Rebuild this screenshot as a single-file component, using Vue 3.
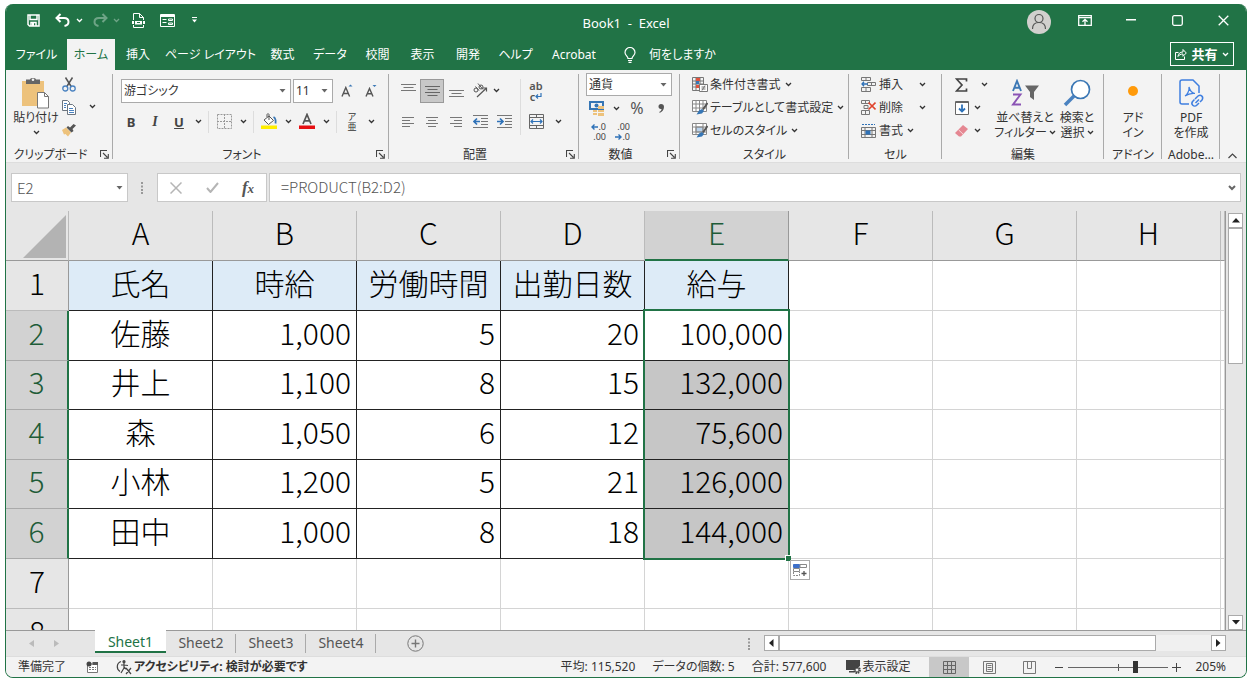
<script setup>
import { h, ref } from 'vue'

const Chevron = () =>
  h('svg', { class: 'chev', width: 7, height: 5, viewBox: '0 0 7 5', 'aria-hidden': 'true' }, [
    h('path', { d: 'M1 1l2.5 2.5L6 1', fill: 'none', stroke: 'currentColor', 'stroke-width': 1.3 }),
  ])
const Caret = () =>
  h('svg', { class: 'caret', width: 7, height: 4, viewBox: '0 0 7 4', 'aria-hidden': 'true' }, [
    h('path', { d: 'M.5 0h6L3.5 3.6z', fill: '#666' }),
  ])
const Launcher = () =>
  h('button', { class: 'launcher', 'aria-label': '詳細設定' }, [
    h('svg', { width: 9, height: 9, viewBox: '0 0 9 9' }, [
      h('path', { d: 'M.5 7V.5H7M3 3l4.500 4.500M8.300 4v4.300H4', fill: 'none', stroke: '#444', 'stroke-width': 1.100 }),
    ]),
  ])

const tabs = ['ファイル', 'ホーム', '挿入', 'ページ レイアウト', '数式', 'データ', '校閲', '表示', '開発', 'ヘルプ', 'Acrobat']
const columns = ['A', 'B', 'C', 'D', 'E', 'F', 'G', 'H']
const rows = [
  ['氏名', '時給', '労働時間', '出勤日数', '給与'],
  ['佐藤', '1,000', '5', '20', '100,000'],
  ['井上', '1,100', '8', '15', '132,000'],
  ['森', '1,050', '6', '12', '75,600'],
  ['小林', '1,200', '5', '21', '126,000'],
  ['田中', '1,000', '8', '18', '144,000'],
  [],
  [],
]
const sheets = ['Sheet1', 'Sheet2', 'Sheet3', 'Sheet4']
const activeTab = ref('ホーム')
const activeSheet = ref('Sheet1')
const cellName = ref('E2')
const formula = ref('=PRODUCT(B2:D2)')
const zoom = ref(68)

function cellClass(r, c) {
  return {
    filled: r < 6 && c < 5,
    title: r === 0 && c < 5,
    name: c === 0,
    picked: c === 4 && r > 1 && r < 6,
    anchor: c === 4 && r === 1,
  }
}
</script>

<template>
  <div class="page">
    <div class="window">
      <header class="titlebar">
        <div class="quick">
          <button aria-label="上書き保存">
            <svg width="13" height="13" viewBox="0 0 13 13" fill="none" stroke="#fff" stroke-width="1.500"><path d="M1 1h11v11H2.500L1 10.500zM3 1v4.500h7V1M4 12V8.500h5V12" /><path d="M5 9h2v3H5z" fill="#fff" stroke="none" /></svg>
          </button>
          <button aria-label="元に戻す">
            <svg width="15" height="14" viewBox="0 0 15 14" fill="none" stroke="#fff" stroke-width="2"><path d="M5.500 1L1.500 5l4 4M2 5h7c3 0 4.500 1.500 4.500 4 0 2-1.500 3.500-4 4" /></svg>
          </button>
          <button class="drop" aria-label="元に戻す一覧"><Chevron /></button>
          <button class="faded" aria-label="やり直し">
            <svg width="15" height="14" viewBox="0 0 15 14" fill="none" stroke="#fff" stroke-width="2"><path d="M9.500 1l4 4-4 4M13 5H6C3 5 1.500 6.500 1.500 9c0 2 1.500 3.500 4 4" /></svg>
          </button>
          <button class="drop faded" aria-label="やり直し一覧"><Chevron /></button>
          <button aria-label="印刷プレビュー">
            <svg width="13" height="15" viewBox="0 0 13 15" fill="none" stroke="#fff"><path d="M1.500 7V.5h6l4 4V7M7.500.5v4h4M1.500 12v2.500h10V12" /><path d="M0 8h2v3H0zM11 8h2v3h-2zM3 8h7v3.500H3z" fill="#fff" stroke="none" /><path d="M5 9.500h3" stroke="#217346" /></svg>
          </button>
          <button aria-label="フォーム">
            <svg width="15" height="13" viewBox="0 0 15 13" fill="none" stroke="#fff"><path d="M.5.5h14v12H.5z" /><path d="M.5 2h14" stroke-width="2" /><path d="M2.500 5.500h4M2.500 8.500h4M8.500 5h4v1.500h-4zM8.500 9h4v1.500h-4z" /></svg>
          </button>
          <button aria-label="クイック アクセスのユーザー設定">
            <svg width="5" height="6" viewBox="0 0 5 6"><path d="M0 0h5v1H0zM0 2.500h5L2.500 5.500z" fill="#fff" /></svg>
          </button>
        </div>
        <div class="doc-title">Book1&nbsp; -&nbsp; Excel</div>
        <div class="sysbuttons">
          <button aria-label="アカウント">
            <svg width="24" height="24" viewBox="0 0 24 24"><circle cx="12" cy="12" r="12" fill="#d2d0ce" /><g fill="none" stroke="#555" stroke-width="1.200"><circle cx="12" cy="8.500" r="4" /><path d="M5.500 19c0-4 2.500-6.500 6.500-6.500s6.500 2.500 6.500 6.500" /></g></svg>
          </button>
          <button aria-label="リボンの表示オプション">
            <svg width="14" height="11" viewBox="0 0 14 11" fill="none" stroke="#fff" stroke-width="1.300"><path d="M.7.7h12.600v9.600H.7zM.7 2.700h12.600M7 10V4.500M4.500 6.700L7 4.300l2.500 2.400" /></svg>
          </button>
          <button aria-label="最小化"><svg width="10" height="2" viewBox="0 0 10 2"><path d="M0 0h10v1.500H0z" fill="#fff" /></svg></button>
          <button aria-label="最大化"><svg width="11" height="11" viewBox="0 0 11 11"><rect x=".7" y=".7" width="9.600" height="9.600" rx="1.500" fill="none" stroke="#fff" stroke-width="1.300" /></svg></button>
          <button aria-label="閉じる"><svg width="11" height="11" viewBox="0 0 11 11"><path d="M.7.7l9.600 9.600M10.300.7L.7 10.300" stroke="#fff" stroke-width="1.300" /></svg></button>
        </div>
      </header>

      <nav class="tabbar">
        <div class="tabs">
          <button v-for="t in tabs" :key="t" :class="{ active: t === activeTab }" @click="activeTab = t">{{ t }}</button>
        </div>
        <button class="tell">
          <svg width="12" height="16" viewBox="0 0 12 16" fill="none" stroke="#fff" stroke-width="1.200"><path d="M4 11.500C4 9 1 8.500 1 5.500a5 5 0 0 1 10 0c0 3-3 3.500-3 6zM4 13.500h4M4.500 15.300h3" /></svg>
          <span>何をしますか</span>
        </button>
        <button class="share">
          <svg width="12" height="12" viewBox="0 0 12 12" fill="none" stroke="#fff"><path d="M3.500 4.500h-3v7h9v-3M3 8.500c.3-3 2-4.500 5-4.500V1.500L11.300 5 8 8.300V6C5.500 6 4 7 3 8.500z" /></svg>
          <span>共有</span><Chevron />
        </button>
      </nav>

      <section class="ribbon">
        <div class="group g-clip">
          <div class="body">
            <button class="big">
              <svg width="30" height="32" viewBox="0 0 30 32"><path d="M1 4h22v25H1z" fill="#edc27c" /><path d="M5 2.500h4C9 .5 15 .5 15 2.500h4V7H5z" fill="#666" /><circle cx="12" cy="2.800" r="1.300" fill="#f3f3f3" /><path d="M16.500 15.500h7l4 4V31h-11z" fill="#fff" stroke="#777" /><path d="M23.500 15.500v4h4" fill="none" stroke="#777" /></svg>
              <span>貼り付け</span><Chevron />
            </button>
            <div class="stack">
              <button aria-label="切り取り">
                <svg width="14" height="15" viewBox="0 0 14 15" fill="none"><path d="M3.500.5L9.500 10M10.500.5L4.500 10" stroke="#555" stroke-width="1.500" /><circle cx="3.300" cy="11.500" r="2.500" stroke="#4a82c0" stroke-width="1.300" /><circle cx="10.700" cy="11.500" r="2.500" stroke="#4a82c0" stroke-width="1.300" /></svg>
              </button>
              <button aria-label="コピー">
                <svg width="14" height="15" viewBox="0 0 14 15" stroke="#6d7680"><path d="M.5.5h5l2 2v8h-7z" fill="#fff" /><path d="M5.500 4.500h5l3 3v7h-8z" fill="#fff" /><path d="M2 3.500h3M2 5.500h2M2 7.500h2M7 8.500h4M7 10.500h5M7 12.500h5" stroke="#4a82c0" /></svg>
              </button>
              <button aria-label="書式のコピー">
                <svg width="14" height="13" viewBox="0 0 14 13"><path d="M0 6l4-2.500 5 5L6 12.500 3.500 10 2 10.500z" fill="#edc27c" /><path d="M4.500 3.500L6 2l2 1.500L11.500 0 14 1.500 10.500 5l1 2L9.500 8.500z" fill="#555" /></svg>
              </button>
            </div>
            <button class="mini" aria-label="コピーのオプション"><Chevron /></button>
          </div>
          <footer><span>クリップボード</span><Launcher /></footer>
        </div>

        <div class="group g-font">
          <div class="body rows">
            <div class="line">
              <div class="combo face"><select aria-label="フォント名"><option>游ゴシック</option></select><Caret /></div>
              <div class="combo size"><select aria-label="フォント サイズ"><option>11</option></select><Caret /></div>
              <button class="tool" aria-label="フォント サイズの拡大">
                <svg width="12" height="14" viewBox="0 0 12 14" fill="none"><path d="M1 12.500L4.800 3.500l3.800 9M2.300 9.500h5" stroke="#555" stroke-width="1.400" /><path d="M7.500 2.500L9.500.5l2 2z" fill="#3c78b5" /></svg>
              </button>
              <button class="tool" aria-label="フォント サイズの縮小">
                <svg width="12" height="14" viewBox="0 0 12 14" fill="none"><path d="M1 12.500L4.500 4.500l3.500 8M2.300 9.800h4.500" stroke="#555" stroke-width="1.400" /><path d="M7.500 1l2 2 2-2z" fill="#3c78b5" /></svg>
              </button>
            </div>
            <div class="line">
              <button class="tool letter bold">B</button>
              <button class="tool letter italic">I</button>
              <button class="tool letter under">U</button>
              <button class="mini" aria-label="下線の種類"><Chevron /></button>
              <i class="rule"></i>
              <button class="tool" aria-label="罫線">
                <svg width="15" height="15" viewBox="0 0 15 15" fill="none" stroke="#999"><path d="M.5.5h14v14H.5zM7.500 0v15M0 7.500h15" stroke-dasharray="2 1" /></svg>
              </button>
              <button class="mini" aria-label="罫線の種類"><Chevron /></button>
              <i class="rule"></i>
              <button class="tool" aria-label="塗りつぶしの色">
                <svg width="17" height="17" viewBox="0 0 17 17" fill="none"><path d="M0 12.500h16V16H0z" fill="#ffee00" /><path d="M3 7l5-4 4.500 4.500-5 4zM8 7V1.500C8 .5 6 .5 6 1.500V4" fill="#fff" stroke="#555" /><path d="M12.500 4c2 1 2.500 3 2 6.500" stroke="#3c78b5" stroke-width="1.800" /></svg>
              </button>
              <button class="mini" aria-label="塗りつぶしの色一覧"><Chevron /></button>
              <button class="tool wide" aria-label="フォントの色">
                <svg width="16" height="17" viewBox="0 0 16 17"><path d="M4 11L8 1.500 12 11M5.300 7.800h5.400" fill="none" stroke="#555" stroke-width="1.700" /><path d="M0 12.500h16V16H0z" fill="#e60f12" /></svg>
              </button>
              <button class="mini" aria-label="フォントの色一覧"><Chevron /></button>
              <i class="rule"></i>
              <button class="tool ruby" aria-label="ふりがなの表示"><span>ア</span><span>亜</span></button>
              <button class="mini" aria-label="ふりがなの設定"><Chevron /></button>
            </div>
          </div>
          <footer><span>フォント</span><Launcher /></footer>
        </div>

        <div class="group g-align">
          <div class="body">
            <div class="rows">
              <div class="line">
                <button class="tool" aria-label="上揃え"><svg width="15" height="14" viewBox="0 0 15 14" stroke="#777"><path d="M0 .5h15M2.500 3.500h10M0 6.500h15" /></svg></button>
                <button class="tool on" aria-label="上下中央揃え"><svg width="15" height="14" viewBox="0 0 15 14" stroke="#666"><path d="M0 2.500h15M2.500 5.500h10M0 8.500h15M2.500 11.500h10" /></svg></button>
                <button class="tool" aria-label="下揃え"><svg width="15" height="14" viewBox="0 0 15 14" stroke="#777"><path d="M0 6.500h15M2.500 9.500h10M0 12.500h15" /></svg></button>
                <button class="tool" aria-label="方向">
                  <svg width="16" height="15" viewBox="0 0 16 15" fill="none" stroke="#555"><circle cx="4" cy="7" r="2" /><path d="M3.500 3.500l3.500 4M6 .5l5 6" /><circle cx="9" cy="4" r="2" /><path d="M5 14L14 5.500M11 5h3.500v3.500" stroke-width="1.200" /></svg>
                </button>
                <button class="mini tight" aria-label="方向の設定"><Chevron /></button>
              </div>
              <div class="line">
                <button class="tool" aria-label="左揃え"><svg width="12" height="10" viewBox="0 0 12 10" stroke="#777"><path d="M0 .5h12M0 3.500h8M0 6.500h12M0 9.500h8" /></svg></button>
                <button class="tool" aria-label="中央揃え"><svg width="12" height="10" viewBox="0 0 12 10" stroke="#777"><path d="M0 .5h12M2 3.500h8M0 6.500h12M2 9.500h8" /></svg></button>
                <button class="tool" aria-label="右揃え"><svg width="12" height="10" viewBox="0 0 12 10" stroke="#777"><path d="M0 .5h12M4 3.500h8M0 6.500h12M4 9.500h8" /></svg></button>
                <button class="tool" aria-label="インデントを減らす"><svg width="15" height="13" viewBox="0 0 15 13" stroke="#777" fill="none"><path d="M0 .5h15M8 3.500h7M8 6.500h7M8 9.500h7M0 12.500h15" /><path d="M7 6.500H1M4 3.500l-3 3 3 3" stroke="#2f72b8" stroke-width="1.700" /></svg></button>
                <button class="tool" aria-label="インデントを増やす"><svg width="15" height="13" viewBox="0 0 15 13" stroke="#777" fill="none"><path d="M0 .5h15M8 3.500h7M8 6.500h7M8 9.500h7M0 12.500h15" /><path d="M0 6.500h6M3 3.500l3 3-3 3" stroke="#2f72b8" stroke-width="1.700" /></svg></button>
              </div>
            </div>
            <i class="rule tall"></i>
            <div class="rows">
              <div class="line">
                <button class="tool wrap" aria-label="折り返して全体を表示する">
                  <span>ab</span><span>c<svg width="7" height="6" viewBox="0 0 7 6" fill="none" stroke="#2f72b8" stroke-width="1.200"><path d="M6 0v3.500H1M3 1.500l-2 2 2 2" /></svg></span>
                </button>
              </div>
              <div class="line">
                <button class="tool" aria-label="セルを結合して中央揃え"><svg width="15" height="15" viewBox="0 0 15 15" fill="none" stroke="#666"><path d="M.5.5h14v14H.5zM.5 3.500h14M.5 11.500h14M7.500 0v3M7.500 12v3" /><path d="M2 7.500h11M4 5.500l-2 2 2 2M11 5.500l2 2-2 2" stroke="#2f72b8" stroke-width="1.200" /></svg></button>
                <button class="mini" aria-label="結合の種類"><Chevron /></button>
              </div>
            </div>
          </div>
          <footer><span>配置</span><Launcher /></footer>
        </div>

        <div class="group g-num">
          <div class="body trio">
            <div class="combo fmt"><select aria-label="数値の書式"><option>通貨</option></select><Caret /></div>
            <div class="line">
              <button class="tool" aria-label="通貨表示形式"><svg width="16" height="15" viewBox="0 0 16 15"><path d="M0 0h15v9H0z" fill="#3676b5" /><path d="M2 2h11v5H2z" fill="#f3f3f3" /><circle cx="7.500" cy="4.500" r="2" fill="#3676b5" /><path d="M9 5h6v3H9zM9 9h6v2H9zM9 12h6v3H9zM4 9h4v2H4zM4 12h4v2H4z" fill="#edc27c" /></svg></button>
              <button class="mini" aria-label="通貨の種類"><Chevron /></button>
              <button class="tool percent">%</button>
              <button class="tool" aria-label="桁区切りスタイル"><svg width="6" height="9" viewBox="0 0 6 9"><path d="M3 0c2 0 3 1.200 3 3 0 3-2 5-4.500 6V7.800C3 7 3.500 6 3.500 5 1.500 5.300.5 4 .5 2.600.5 1 1.500 0 3 0z" fill="#555" /></svg></button>
            </div>
            <div class="line">
              <button class="tool dec" aria-label="小数点以下の表示桁数を増やす"><span><svg width="7" height="6" viewBox="0 0 7 6" fill="none" stroke="#2f72b8" stroke-width="1.400"><path d="M7 3H1M3.500.5L1 3l2.500 2.500" /></svg>.0</span><span>.00</span></button>
              <button class="tool dec" aria-label="小数点以下の表示桁数を減らす"><span>.00</span><span><svg width="7" height="6" viewBox="0 0 7 6" fill="none" stroke="#2f72b8" stroke-width="1.400"><path d="M0 3h6M3.500.5L6 3 3.500 5.500" /></svg>.0</span></button>
            </div>
          </div>
          <footer><span>数値</span><Launcher /></footer>
        </div>

        <div class="group g-style">
          <div class="body trio">
            <button class="item">
              <svg width="16" height="15" viewBox="0 0 16 15" fill="none" stroke="#777"><path d="M.5.5h11v13H.5zM4 .5v13M8 .5v13M.5 4h11M.5 7h11M.5 10h11" /><path d="M4 1h4v3H4zM4 8h3v3H4z" fill="#e0533d" stroke="none" /><path d="M4 4h3v3H4z" fill="#3676b5" stroke="none" /><path d="M7.500 7.500h8v7h-8z" fill="#fff" /><path d="M9.500 10h4M9.500 12h4M13 8.500l-3 5" /></svg>
              <span>条件付き書式</span><Chevron />
            </button>
            <button class="item">
              <svg width="16" height="15" viewBox="0 0 16 15" fill="none" stroke="#888"><path d="M.5.5h14v11H.5z" fill="#fff" /><path d="M4 .5v11M7.500.5v11M11 .5v11M.5 4h14M.5 8h14" /><path d="M4.500 14.500L7 10.500l3-1.500 2 2-2 2.500z" fill="#3676b5" stroke="none" /><path d="M11 9.500l4.500-6.500" stroke="#555" stroke-width="2" /></svg>
              <span>テーブルとして書式設定</span><Chevron />
            </button>
            <button class="item">
              <svg width="16" height="15" viewBox="0 0 16 15" fill="none" stroke="#888"><path d="M.5.5h14v11H.5z" fill="#fff" /><path d="M4 4h7v5H4z" fill="#b9d3ec" /><path d="M4 .5v11M11 .5v11M.5 4h14M.5 9h14" /><path d="M4.500 14.500L7 10.500l3-1.500 2 2-2 2.500z" fill="#3676b5" stroke="none" /><path d="M11 9.500l4.500-6.500" stroke="#555" stroke-width="2" /></svg>
              <span>セルのスタイル</span><Chevron />
            </button>
          </div>
          <footer class="plain"><span>スタイル</span></footer>
        </div>

        <div class="group g-cell">
          <div class="body trio">
            <button class="item spread">
              <svg width="15" height="15" viewBox="0 0 15 15" fill="none" stroke="#777"><path d="M.5.5h9v3h-9zM5 .5v3M.5 10.500h9v4h-9zM5 10.500v4M6.500 5.500h8v3h-8zM10.500 5.500v3" /><path d="M7 7H1M3 4.800L1 7l2 2.200" stroke="#2f72b8" stroke-width="1.300" /></svg>
              <span>挿入</span><Chevron />
            </button>
            <button class="item spread">
              <svg width="15" height="15" viewBox="0 0 15 15" fill="none" stroke="#777"><path d="M.5.5h8v3h-8zM4.500.5v3M.5 10.500h8v4h-8zM4.500 10.500v4M3 5.500h4v3H3z" /><path d="M7.500 2.500l7 7M14.500 2.500l-7 7" stroke="#e0442c" stroke-width="1.600" /></svg>
              <span>削除</span><Chevron />
            </button>
            <button class="item">
              <svg width="15" height="16" viewBox="0 0 15 16" fill="none" stroke="#777"><path d="M1 1.500h13" stroke="#2f72b8" stroke-dasharray="2 1" /><path d="M.5 4.500h14v10H.5zM4 4v10M11 4v10M.5 7.500h14M.5 11.500h14" /><path d="M4.500 7.500h5v4h-5z" fill="#2f72b8" stroke="none" /></svg>
              <span>書式</span><Chevron />
            </button>
          </div>
          <footer class="plain"><span>セル</span></footer>
        </div>

        <div class="group g-edit">
          <div class="body">
            <div class="trio">
              <button class="item edit" aria-label="オート SUM">
                <svg width="13" height="14" viewBox="0 0 13 14" fill="none" stroke="#444" stroke-width="1.700"><path d="M11.500 3.500V1H1.500L7 7l-5.500 6h10v-2.500" /></svg><Chevron />
              </button>
              <button class="item edit near" aria-label="フィル">
                <svg width="14" height="14" viewBox="0 0 14 14" fill="none"><path d="M.5.5h13v13H.5z" fill="#fff" stroke="#666" /><path d="M0 1.500h14" stroke="#666" /><path d="M7 3.500v7M4 7.500l3 3 3-3" stroke="#2f72b8" stroke-width="1.800" /></svg><Chevron />
              </button>
              <button class="item edit near" aria-label="クリア">
                <svg width="13" height="12" viewBox="0 0 13 12"><path d="M8 0l5 4-7 7.500H4L0 8z" fill="#e58792" /><path d="M3.500 4.800l4.500 4.300" stroke="#f9d7da" /></svg><Chevron />
              </button>
            </div>
            <button class="big sort">
              <svg width="28" height="28" viewBox="0 0 28 28" fill="none" stroke-width="1.900"><path d="M2 12L6 2l4 10M3.500 8.800h5" stroke="#3c78b5" /><path d="M2 15.500h7.500L2 25.500h8" stroke="#8b54b5" /><path d="M14 6.500h14l-5 6.500v8l-4-3v-5z" fill="#666" /></svg>
              <span>並べ替えと</span><span>フィルター <Chevron /></span>
            </button>
            <button class="big find">
              <svg width="28" height="28" viewBox="0 0 28 28" fill="none"><circle cx="17.500" cy="10.500" r="9" fill="#fff" stroke="#3c78b5" stroke-width="1.700" /><path d="M11 17L2 26" stroke="#4a82c0" stroke-width="3.500" /></svg>
              <span>検索と</span><span>選択 <Chevron /></span>
            </button>
          </div>
          <footer class="plain"><span>編集</span></footer>
        </div>

        <div class="group g-addin">
          <div class="body"><button class="big"><svg width="28" height="28" viewBox="0 0 28 28"><circle cx="14" cy="12" r="5" fill="#ff9a0a" /></svg><span>アド</span><span>イン</span></button></div>
          <footer class="plain"><span>アドイン</span></footer>
        </div>

        <div class="group g-adobe">
          <div class="body">
            <button class="big">
              <svg width="28" height="28" viewBox="0 0 28 28" fill="none" stroke="#3f7fe0" stroke-width="1.500"><path d="M12 25H5c-1.200 0-2-.8-2-2V3c0-1.200.8-2 2-2h11l6 6v7" /><path d="M8 17c2-1 4.500-5 4-9 1 4 3 6 6 6.500-4-.5-7 .5-10 2.500z" stroke-width="1.200" /><path d="M18 20l3-3c3-2 6 1 4 4l-2 2M22 20.500l-3.500 3.500M22 24l-2 2c-3 3-7-1-4-4l1.500-1.500" /></svg>
              <span>PDF</span><span>を作成</span>
            </button>
          </div>
          <footer class="plain"><span>Adobe…</span></footer>
        </div>
        <button class="collapse" aria-label="リボンを折りたたむ"><svg width="9" height="6" viewBox="0 0 9 6"><path d="M.5 5L4.500 1l4 4" fill="none" stroke="#444" stroke-width="1.200" /></svg></button>
      </section>

      <section class="formulabar">
        <div class="namebox"><input v-model="cellName" aria-label="名前ボックス" /><Caret /></div>
        <svg class="grip" width="2" height="12" viewBox="0 0 2 12" fill="#999"><path d="M0 0h2v2H0zM0 3.500h2v2H0zM0 7h2v2H0zM0 10h2v2H0z" /></svg>
        <div class="fxbox">
          <button aria-label="キャンセル"><svg width="12" height="12" viewBox="0 0 12 12"><path d="M.5.5l11 11M11.500.5l-11 11" stroke="#b5b5b5" stroke-width="1.500" /></svg></button>
          <button aria-label="入力"><svg width="13" height="11" viewBox="0 0 13 11"><path d="M1 6l3.500 4L12 1" fill="none" stroke="#b5b5b5" stroke-width="2" /></svg></button>
          <button class="fx" aria-label="関数の挿入">f<small>x</small></button>
        </div>
        <div class="formula"><input v-model="formula" aria-label="数式バー" />
          <button aria-label="数式バーの展開"><svg width="8" height="6" viewBox="0 0 8 6"><path d="M1 1l3 3 3-3" fill="none" stroke="#666" stroke-width="2" /></svg></button>
        </div>
      </section>

      <main class="sheet">
        <div class="gridwrap">
          <table>
            <colgroup><col class="c-head" /><col v-for="c in columns" :key="c" class="c-data" /><col /></colgroup>
            <thead>
              <tr>
                <th class="corner"><svg width="43" height="43" viewBox="0 0 43 43"><path d="M43 0v43H0z" fill="#b3b3b3" /></svg></th>
                <th v-for="c in columns" :key="c" scope="col" :class="{ sel: c === 'E' }">{{ c }}</th>
                <th></th>
              </tr>
            </thead>
            <tbody>
              <tr v-for="(row, r) in rows" :key="r">
                <th scope="row" :class="{ sel: r > 0 && r < 6 }">{{ r + 1 }}</th>
                <td v-for="(c, i) in columns" :key="c" :class="cellClass(r, i)">
                  {{ row[i] }}
                  <span v-if="i === 4 && r === 1" class="selection">
                    <i class="handle"></i>
                    <button class="autofill" aria-label="オートフィル オプション">
                      <svg width="15" height="14" viewBox="0 0 15 14" fill="none" stroke="#888"><path d="M.5 1.500h6v3h-6z" fill="#3d6fc9" stroke="#3d6fc9" /><path d="M7 1.500h6.500v3H7zM.5 5.500h6v3h-6z" /><path d="M.5 9v3.500h6V9" stroke-dasharray="2 1" /><path d="M11 8v5M8.500 10.500h5" stroke="#555" stroke-width="1.300" /></svg>
                    </button>
                  </span>
                </td>
                <td></td>
              </tr>
            </tbody>
          </table>
        </div>
        <div class="vscroll">
          <button aria-label="上へ"><svg width="8" height="5" viewBox="0 0 8 5"><path d="M0 4.500h8L4 0z" fill="#222" /></svg></button>
          <div class="vthumb"></div>
          <button aria-label="下へ"><svg width="8" height="5" viewBox="0 0 8 5"><path d="M0 0h8L4 4.500z" fill="#222" /></svg></button>
        </div>
      </main>

      <section class="sheetbar">
        <div class="nav">
          <button aria-label="前のシート"><svg width="5" height="7" viewBox="0 0 5 7"><path d="M5 0v7L0 3.500z" fill="#bbb" /></svg></button>
          <button aria-label="次のシート"><svg width="5" height="7" viewBox="0 0 5 7"><path d="M0 0v7l5-3.500z" fill="#bbb" /></svg></button>
        </div>
        <button v-for="s in sheets" :key="s" class="stab" :class="{ active: s === activeSheet }" @click="activeSheet = s">{{ s }}</button>
        <button class="add" aria-label="新しいシート"><svg width="17" height="17" viewBox="0 0 17 17" fill="none" stroke="#777"><circle cx="8.500" cy="8.500" r="7.700" /><path d="M8.500 4.500v8M4.500 8.500h8" stroke-width="1.400" /></svg></button>
        <svg class="grip push" width="2" height="12" viewBox="0 0 2 12" fill="#999"><path d="M0 0h2v2H0zM0 3.500h2v2H0zM0 7h2v2H0zM0 10h2v2H0z" /></svg>
        <div class="hscroll">
          <button aria-label="左へ"><svg width="5" height="8" viewBox="0 0 5 8"><path d="M4.500 0v8L0 4z" fill="#222" /></svg></button>
          <div class="hthumb"></div>
          <button aria-label="右へ"><svg width="5" height="8" viewBox="0 0 5 8"><path d="M0 0v8l4.500-4z" fill="#222" /></svg></button>
        </div>
      </section>

      <footer class="status">
        <span class="ready">準備完了</span>
        <svg width="13" height="12" viewBox="0 0 13 12"><path d="M1.500 3h10v8.500h-10z" fill="#fff" stroke="#777" /><path d="M6.500 1h5.500v3H6.500z" fill="#555" /><circle cx="3" cy="3" r="2.500" fill="#444" /><path d="M3 6.500h7M3 8.500h7" stroke="#777" stroke-dasharray="2 1" /></svg>
        <button class="access">
          <svg width="16" height="15" viewBox="0 0 16 15" fill="none" stroke="#444" stroke-width="1.200"><path d="M5 1.500C.5 3 0 9 4 11.500" /><path d="M8 2v7M5 5h3l4 .5M8 8l-3 5M8 7l2 2M10 8l5 6M15 8l-5 6" /><circle cx="8" cy="1.700" r="1" fill="#444" /></svg>
          <span>アクセシビリティ: 検討が必要です</span>
        </button>
        <div class="stats"><span>平均: 115,520</span><span>データの個数: 5</span><span>合計: 577,600</span></div>
        <button class="display">
          <svg width="15" height="14" viewBox="0 0 15 14"><path d="M0 0h14v6l-5 4H0zM3 11h5v1.500H3z" fill="#444" /><circle cx="11" cy="10" r="3" fill="none" stroke="#444" stroke-width="1.800" stroke-dasharray="1.600 .7" /><circle cx="11" cy="10" r="2" fill="#f3f3f3" stroke="#444" /></svg>
          <span>表示設定</span>
        </button>
        <div class="views">
          <button class="on" aria-label="標準"><svg width="13" height="13" viewBox="0 0 13 13" fill="none" stroke="#666"><path d="M.5.5h12v12H.5zM4.500.5v12M8.500.5v12M.5 4.500h12M.5 8.500h12" /></svg></button>
          <button aria-label="ページ レイアウト表示"><svg width="13" height="13" viewBox="0 0 13 13" fill="none" stroke="#777"><path d="M.5.5h12v12H.5zM3.500 2.500h6v8h-6zM4.500 4.500h4M4.500 6.500h4M4.500 8.500h4" /></svg></button>
          <button aria-label="改ページ プレビュー"><svg width="13" height="13" viewBox="0 0 13 13" fill="none" stroke="#777"><path d="M.5.5h12v12H.5zM4.500.5v7h4V.5" /></svg></button>
        </div>
        <div class="zoom">
          <button aria-label="縮小"><svg width="9" height="9" viewBox="0 0 9 9"><path d="M0 4.500h8" stroke="#444" /></svg></button>
          <div class="track"><input v-model="zoom" type="range" min="0" max="100" aria-label="ズーム" /></div>
          <button aria-label="拡大"><svg width="9" height="9" viewBox="0 0 9 9"><path d="M0 4.500h9M4.500 0v9" stroke="#444" /></svg></button>
          <span>205%</span>
        </div>
      </footer>
    </div>
  </div>
</template>

<style>
body { margin: 0; background: #fff; }
</style>

<style scoped>
* { box-sizing: border-box; }
.page {
  height: 100vh;
  padding: 4px 5px 6px;
  font: 12px/16px "Noto Sans", "Noto Sans CJK JP", sans-serif;
  font-feature-settings: "palt";
  color: #333;
}
button, input, select { font: inherit; font-feature-settings: inherit; color: inherit; border: 0; padding: 0; margin: 0; background: none; border-radius: 0; outline: 0; }
button { display: flex; align-items: center; justify-content: center; white-space: nowrap; }
svg { flex: none; display: block; }
.window {
  height: 100%;
  display: flex;
  flex-direction: column;
  border: 1px solid #217346;
  border-top: 0;
  border-radius: 8px;
  overflow: hidden;
  background: #e6e6e6;
}

.titlebar { display: grid; grid-template-columns: 1fr auto 1fr; height: 35px; padding-bottom: 3px; background: #217346; color: #fff; align-items: center; flex: none; }
.quick { display: grid; grid-template-columns: 29px 22px 16px 21px 17px 29px 27px 20px; padding-left: 17px; }
.quick button { width: 20px; height: 24px; }
.quick .drop { width: 10px; }
.faded { opacity: .35; }
.doc-title { padding-top: 5px; font-size: 13px; }
.sysbuttons { display: flex; justify-content: flex-end; }
.sysbuttons button { width: 46px; height: 32px; }
.sysbuttons button:first-child svg { margin-top: 3px; }

.tabbar { display: flex; height: 31px; background: #217346; color: #fff; flex: none; align-items: stretch; }
.tabs { display: grid; grid-template-columns: 61px 48px 46px 99px 45px 50px 45px 45px 46px 49px 68px; }
.tabs .active { background: #f3f3f3; color: #217346; }
.tell { gap: 13px; margin-left: 16px; }
.share { margin: 3px 12px 4px auto; width: 64px; border: 1px solid #fff; gap: 4px; font-weight: 700; font-size: 13px; }

.ribbon { display: flex; height: 93px; background: #f3f3f3; flex: none; border-bottom: 1px solid #ddd; }
.group { display: flex; flex-direction: column; position: relative; flex: none; }
.group::after { content: ""; position: absolute; right: 0; top: 4px; bottom: 3px; width: 1px; background: #aaa; }
.group .body { height: 77px; padding-top: 3px; display: flex; }
.group > footer { display: grid; grid-template-columns: 1fr 18px; height: 15px; line-height: 15px; text-align: center; white-space: nowrap; }
.group > footer > span { justify-self: center; }
.group > footer.plain { grid-template-columns: 1fr; }
.g-clip { width: 107px; }
.g-font { width: 276px; }
.g-align { width: 190px; }
.g-num { width: 101px; }
.g-style { width: 169px; }
.g-cell { width: 93px; }
.g-edit { width: 162px; }
.g-addin { width: 58px; }
.g-adobe { width: 58px; }
.big { flex-direction: column; justify-content: flex-start; line-height: 15px; padding-top: 6px; width: 52px; }
.big > svg:first-child { margin-bottom: 3px; }
.big > span { display: flex; align-items: center; gap: 2px; }
.g-clip .big { padding-top: 4px; margin-left: 4px; }
.g-clip .big > svg:first-child { margin-bottom: 1px; }
.g-clip .big .chev { margin-top: 5px; }
.stack { display: grid; grid-template-rows: repeat(3, 23px); width: 14px; }
.g-clip .mini { margin-left: 9px; height: 66px; }
.rows { display: flex; flex-direction: column; }
.body.rows { flex-direction: column; }
.line { display: flex; align-items: center; height: 31px; }
.rows .line:first-child { margin-top: 2px; }
.tool { width: 24px; height: 24px; flex: none; }
.mini { width: 14px; height: 24px; flex: none; }
.tight { width: 8px; }
.rule { width: 1px; height: 22px; background: #ddd; margin: 0 3px; flex: none; }
.rule.tall { height: 56px; margin: 6px 3px 0 4px; }
.combo { position: relative; background: #fff; border: 1px solid #aaa; height: 24px; flex: none; }
.combo select { appearance: none; width: 100%; height: 100%; padding-left: 2px; }
.caret { position: absolute; right: 4px; top: 50%; margin-top: -2px; pointer-events: none; }
.g-font .body { padding-left: 6px; }
.face { width: 170px; margin-left: 2px; }
.size { width: 40px; margin: 0 2px; }
.fmt { width: 86px; margin-left: 1px; }
.letter { color: #444; font-size: 13px; }
.bold { font-weight: 700; }
.italic { font: italic 700 14px/16px "Liberation Serif", serif; }
.under { font-weight: 700; text-decoration: underline; }
.ruby { flex-direction: column; font-size: 9px; line-height: 10px; }
.g-align .body { padding-left: 7px; }
.on { background: #c8c8c8; }
.g-align .on { border: 1px solid #999; }
.wrap { flex-direction: column; font-size: 11px; line-height: 11px; font-weight: 600; color: #555; }
.wrap span { display: flex; align-items: center; }
.g-align .mini { margin-left: 3px; }
.g-align .tight { margin-left: 0; }
.body.trio { flex-direction: column; }
.trio > * { height: 23px; }
.trio > .line { height: 24px; }
.g-num .body { padding-left: 6px; }
.percent { font-size: 16px; color: #555; margin-left: 2px; }
.dec { flex-direction: column; font-size: 9px; line-height: 10px; align-items: center; color: #444; }
.dec span { display: flex; align-items: center; width: 18px; justify-content: flex-end; }
.g-style .body, .g-cell .body { padding-left: 12px; }
.item { justify-content: flex-start; gap: 3px; width: max-content; }
.item .chev { margin-left: 1px; }
.spread { width: 65px; }
.spread .chev { margin-left: auto; }
.g-style .item > svg:first-child { margin-right: -1px; }
.g-edit .body { padding-left: 13px; }
.edit { width: 33px; gap: 0; justify-content: space-between; }
.near { width: 26px; }
.g-edit .trio { width: 34px; }
.sort { margin-left: 10px; }
.g-addin .big, .g-adobe .big { width: 100%; }
.collapse { align-self: flex-end; margin-left: 6px; width: 12px; height: 12px; }

.formulabar { display: flex; align-items: center; height: 48px; padding: 1px 5px 0; flex: none; color: #555; }
.namebox, .fxbox, .formula { height: 29px; background: #fff; border: 1px solid #c8c8c8; display: flex; align-items: center; }
.namebox { width: 117px; position: relative; }
.namebox input, .formula input { width: 100%; height: 100%; min-width: 0; font: 300 15px/20px "Noto Sans CJK JP", sans-serif; padding-left: 5px; }
.formula input { flex: 1; padding: 0 0 2px 11px; }
.formulabar .grip { margin: 0 14px 0 13px; }
.fxbox { width: 110px; }
.fxbox button { flex: 1; height: 100%; }
.fx { font: italic 700 17px/18px "Liberation Serif", serif; color: #555; }
.fx small { font-size: 13px; margin-top: 3px; }
.formula { flex: 1; margin-left: 2px; padding-right: 4px; }

.sheet { display: flex; flex: 1; min-height: 0; }
.gridwrap { flex: 1; min-width: 0; overflow: hidden; border-right: 1px solid #999; }
table { table-layout: fixed; width: 100%; border-spacing: 0; font: 300 30px/40px "Noto Sans CJK JP", sans-serif; font-feature-settings: normal; color: #000; }
.c-head { width: 63px; }
.c-data { width: 144px; }
th, td { padding: 0 0 8px; border-right: 1px solid #d4d4d4; border-bottom: 1px solid #d4d4d4; font-weight: 300; white-space: nowrap; }
td { background: #fff; text-align: right; padding-right: 5px; position: relative; }
thead th { height: 50px; background: #e6e6e6; border-right-color: #bbb; border-bottom-color: #999; }
tbody tr { height: 50px; }
tbody tr:nth-child(3), tbody tr:nth-child(5) { height: 49px; }
tbody th { background: #e6e6e6; border-right-color: #999; border-bottom-color: #bbb; }
.corner { padding: 0; }
.corner svg { margin: 2px 2px 0 auto; }
th.sel { background: #d2d2d2; color: #1e5c38; }
thead th.sel { border-bottom: 2px solid #217346; border-right-color: #999; padding-bottom: 7px; }
tbody th.sel { border-right: 2px solid #217346; border-bottom-color: #aaa; }
.filled { border-color: #222; }
.title, .name { text-align: center; padding-right: 0; }
.title { background: #ddebf7; }
.picked { background: #c6c6c6; }
.selection { position: absolute; z-index: 2; left: -2px; right: -2px; top: -2px; height: 251px; border: 2px solid #217346; }
.handle { position: absolute; right: -3px; bottom: -3px; width: 6px; height: 6px; background: #217346; border: 1px solid #fff; border-width: 1px 0 0 1px; }
.autofill { position: absolute; left: 100%; top: 100%; margin: 2px 0 0 2px; width: 20px; height: 20px; background: #fff; border: 1px solid #aaa; }
.vscroll { width: 20px; padding: 2px 3px 0 2px; display: flex; flex-direction: column; flex: none; }
.vscroll button, .hscroll button { width: 15px; height: 15px; background: #fff; border: 1px solid #aaa; flex: none; }
.vscroll button:last-child { margin-top: auto; }
.vthumb { width: 15px; height: 136px; background: #fff; border: 1px solid #aaa; }

.sheetbar { display: flex; height: 26px; border-top: 1px solid #999; flex: none; font-size: 14px; color: #555; align-items: flex-start; }
.nav { display: flex; width: 89px; padding-left: 13px; }
.nav button { width: 25px; height: 25px; }
.stab { width: 70px; height: 22px; position: relative; padding-top: 1px; }
.stab::after { content: ""; position: absolute; right: 0; top: 3px; bottom: 0; width: 1px; background: #aaa; }
.stab.active { width: 71px; height: 23px; margin-top: -1px; padding-top: 3px; background: #fff; color: #217346; border-bottom: 2px solid #217346; }
.stab.active::after { display: none; }
.add { width: 78px; height: 25px; }
.push { margin: 7px 14px 0 auto; }
.hscroll { width: 462px; display: flex; margin: 4px 20px 0 0; background: #f0f0f0; height: 16px; }
.hscroll button { height: 16px; }
.hthumb { width: 377px; background: #fff; border: 1px solid #aaa; }
.hscroll button:last-child { margin-left: auto; }

.status { display: flex; align-items: center; height: 21px; background: #f3f3f3; border-top: 1px solid #ddd; padding: 0 20px 0 12px; flex: none; white-space: nowrap; }
.ready { width: 68px; }
.access { margin-left: 17px; gap: 2px; font-weight: 700; }
.stats { display: flex; gap: 17px; margin-left: auto; }
.display { margin-left: 20px; gap: 1px; }
.views { display: flex; margin-left: 19px; align-self: stretch; }
.views button { width: 40px; }
.zoom { display: flex; align-items: center; margin-left: 6px; }
.track { position: relative; width: 100px; height: 16px; margin: 0 4px; display: flex; }
.track::before { content: ""; position: absolute; left: 50%; top: 5px; width: 1px; height: 7px; background: #555; }
.track input { appearance: none; width: 100%; height: 16px; position: relative; }
.track input::-webkit-slider-runnable-track { height: 1px; background: #666; }
.track input::-webkit-slider-thumb { appearance: none; width: 5px; height: 12px; margin-top: -6px; background: #333; }
.zoom > span { margin-left: 14px; }
</style>
